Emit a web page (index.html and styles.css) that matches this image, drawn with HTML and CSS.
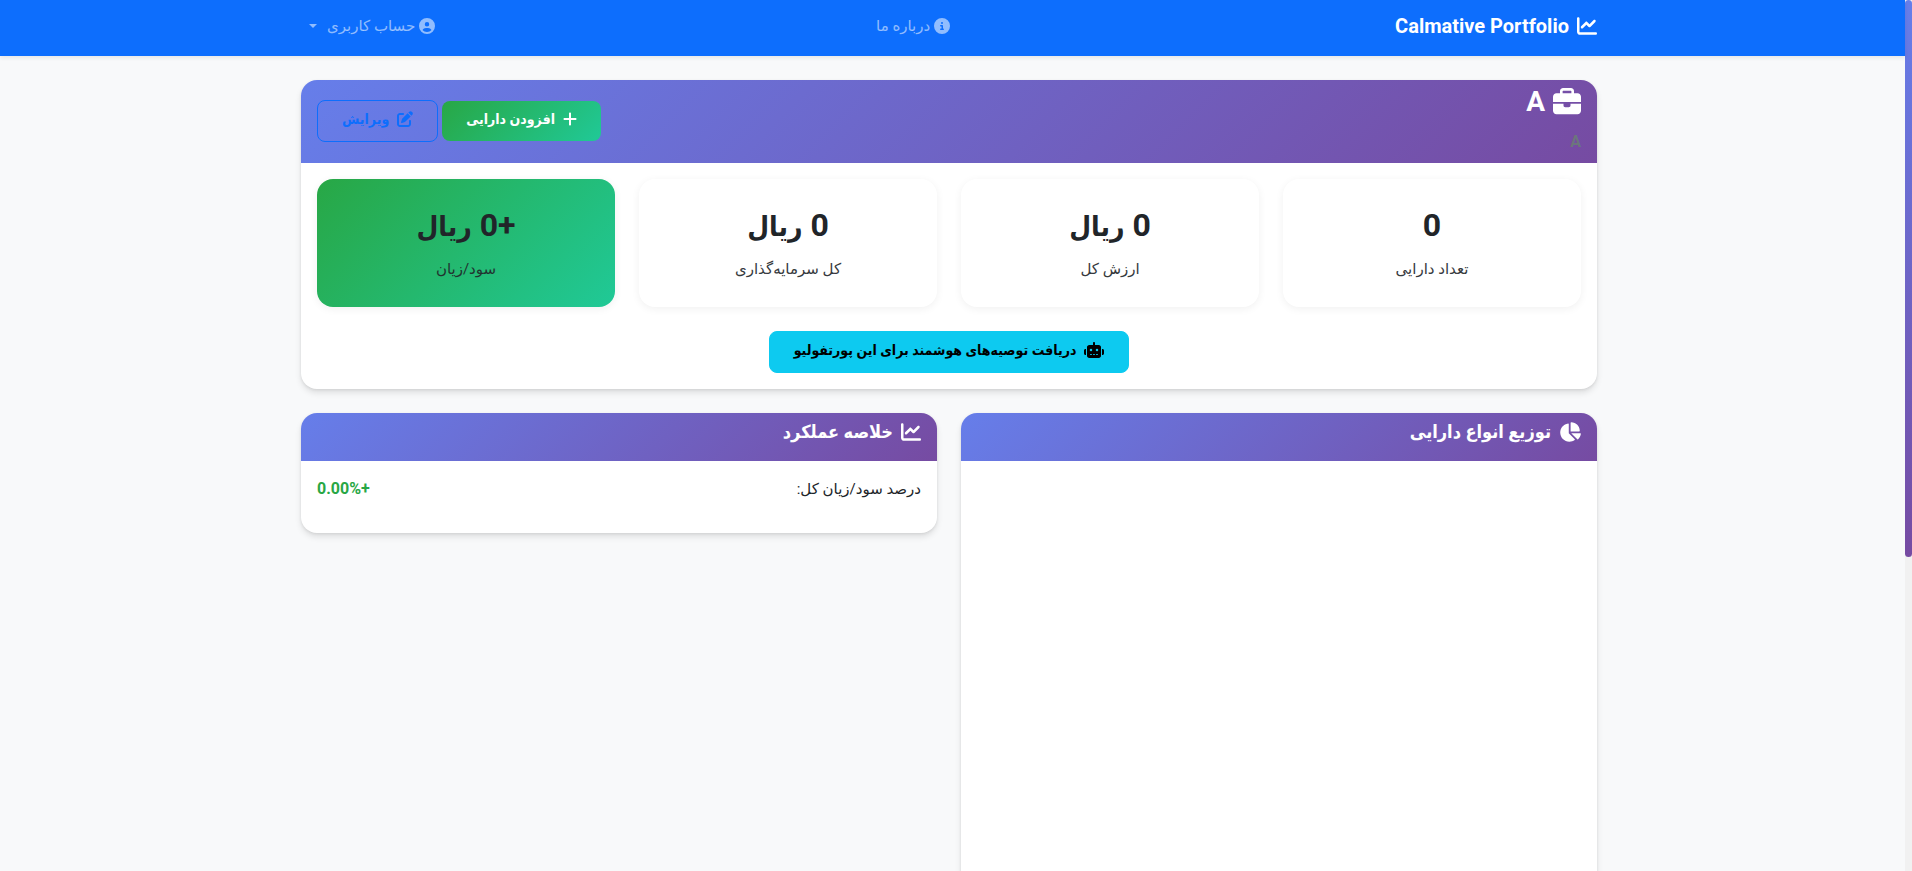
FILE: index.html
```html
<!DOCTYPE html>
<html lang="fa" dir="rtl">
<head>
<meta charset="utf-8">
<meta name="viewport" content="width=device-width, initial-scale=1">
<title>Calmative Portfolio</title>
<link rel="stylesheet" href="styles.css">
</head>
<body>
<svg class="sprite" aria-hidden="true">
  <symbol id="chart-line" viewBox="0 0 512 512"><path d="M64 64c0-17.7-14.3-32-32-32S0 46.3 0 64V400c0 44.2 35.8 80 80 80H480c17.7 0 32-14.3 32-32s-14.3-32-32-32H80c-8.8 0-16-7.2-16-16V64zm406.6 86.6c12.5-12.5 12.5-32.8 0-45.3s-32.8-12.5-45.3 0L320 210.7l-57.4-57.4c-12.5-12.5-32.8-12.5-45.3 0l-112 112c-12.5 12.5-12.5 32.8 0 45.3s32.8 12.5 45.3 0L240 221.3l57.4 57.4c12.5 12.5 32.8 12.5 45.3 0l128-128z"/></symbol>
  <symbol id="circle-info" viewBox="0 0 512 512"><path d="M256 512A256 256 0 1 0 256 0a256 256 0 1 0 0 512zM216 336h24V272H216c-13.3 0-24-10.7-24-24s10.7-24 24-24h48c13.3 0 24 10.7 24 24v88h8c13.3 0 24 10.7 24 24s-10.7 24-24 24H216c-13.3 0-24-10.7-24-24s10.7-24 24-24zm40-208a32 32 0 1 1 0 64 32 32 0 1 1 0-64z"/></symbol>
  <symbol id="circle-user" viewBox="0 0 512 512"><path d="M399 384.2C376.9 345.8 335.4 320 288 320H224c-47.4 0-88.9 25.8-111 64.2c35.2 39.2 86.2 63.8 143 63.8s107.8-24.7 143-63.8zM0 256a256 256 0 1 1 512 0A256 256 0 1 1 0 256zm256 16a72 72 0 1 0 0-144 72 72 0 1 0 0 144z"/></symbol>
  <symbol id="briefcase" viewBox="0 0 512 512"><path d="M184 48H328c4.4 0 8 3.6 8 8V96H176V56c0-4.4 3.6-8 8-8zm-56 8V96H64C28.7 96 0 124.7 0 160v96H192 320 512V160c0-35.3-28.7-64-64-64H384V56c0-30.9-25.1-56-56-56H184c-30.9 0-56 25.1-56 56zM512 288H320v32c0 17.7-14.3 32-32 32H224c-17.7 0-32-14.3-32-32V288H0V416c0 35.3 28.7 64 64 64H448c35.3 0 64-28.7 64-64V288z"/></symbol>
  <symbol id="plus" viewBox="0 0 448 512"><path d="M256 80c0-17.7-14.3-32-32-32s-32 14.3-32 32V224H48c-17.7 0-32 14.3-32 32s14.3 32 32 32H192V432c0 17.7 14.3 32 32 32s32-14.3 32-32V288H400c17.7 0 32-14.3 32-32s-14.3-32-32-32H256V80z"/></symbol>
  <symbol id="edit" viewBox="0 0 512 512"><path d="M471.6 21.7c-21.9-21.9-57.3-21.9-79.2 0L362.3 51.7l97.9 97.9 30.1-30.1c21.9-21.9 21.9-57.3 0-79.2L471.6 21.7zm-299.2 220c-6.1 6.1-10.8 13.6-13.5 21.9l-29.6 88.8c-2.9 8.6-.6 18.1 5.8 24.6s15.9 8.7 24.6 5.8l88.8-29.6c8.2-2.7 15.7-7.4 21.9-13.5L437.7 172.3 339.7 74.3 172.4 241.7zM96 64C43 64 0 107 0 160V416c0 53 43 96 96 96H352c53 0 96-43 96-96V320c0-17.7-14.3-32-32-32s-32 14.3-32 32v96c0 17.7-14.3 32-32 32H96c-17.7 0-32-14.3-32-32V160c0-17.7 14.3-32 32-32h96c17.7 0 32-14.3 32-32s-14.3-32-32-32H96z"/></symbol>
  <symbol id="robot" viewBox="0 0 640 512"><path d="M320 0c17.7 0 32 14.3 32 32V96H472c39.8 0 72 32.2 72 72V440c0 39.8-32.2 72-72 72H168c-39.8 0-72-32.2-72-72V168c0-39.8 32.2-72 72-72H288V32c0-17.7 14.3-32 32-32zM208 384c-8.8 0-16 7.2-16 16s7.2 16 16 16h32c8.8 0 16-7.2 16-16s-7.2-16-16-16H208zm96 0c-8.8 0-16 7.2-16 16s7.2 16 16 16h32c8.8 0 16-7.2 16-16s-7.2-16-16-16H304zm96 0c-8.8 0-16 7.2-16 16s7.2 16 16 16h32c8.8 0 16-7.2 16-16s-7.2-16-16-16H400zM264 256a40 40 0 1 0-80 0 40 40 0 1 0 80 0zm152 40a40 40 0 1 0 0-80 40 40 0 1 0 0 80zM48 224H64V416H48c-26.5 0-48-21.5-48-48V272c0-26.5 21.5-48 48-48zm544 0c26.5 0 48 21.5 48 48v96c0 26.5-21.5 48-48 48H576V224h16z"/></symbol>
  <symbol id="chart-pie" viewBox="0 0 576 512"><path d="M304 240V16.6c0-9 7-16.6 16-16.6C443.7 0 544 100.3 544 224c0 9-7.6 16-16.6 16H304zM32 272C32 150.7 122.1 50.3 239 34.3c9.2-1.3 17 6.1 17 15.4V288L412.5 444.5c6.7 6.7 6.2 17.7-1.5 23.1C371.8 495.6 323.8 512 272 512C139.5 512 32 404.6 32 272zm526.4 16c9.3 0 16.6 7.8 15.4 17c-7.7 55.9-34.6 105.6-73.9 142.3c-6 5.6-15.4 5.2-21.2-.7L320 288H558.4z"/></symbol>
</svg>
<div class="scroller">
  <div class="scroll-track"><div class="scroll-thumb"></div></div>
  <div class="page">
    <header class="navbar">
      <nav class="container navbar-inner">
        <a class="brand" href="#"><svg class="icon"><use href="#chart-line"/></svg><span>Calmative Portfolio</span></a>
        <a class="nav-link" href="#"><svg class="icon"><use href="#circle-info"/></svg><span>درباره ما</span></a>
        <button class="nav-link" type="button"><svg class="icon"><use href="#circle-user"/></svg><span>حساب کاربری</span><i class="caret"></i></button>
      </nav>
    </header>
    <main class="content">
      <div class="container">
        <section class="card">
          <div class="card-header summary-header">
            <div>
              <h1 class="title"><svg class="icon"><use href="#briefcase"/></svg><span>A</span></h1>
              <p class="description">A</p>
            </div>
            <div class="actions">
              <a class="btn btn-add" href="#"><svg class="icon icon-plus"><use href="#plus"/></svg><span>افزودن دارایی</span></a>
              <a class="btn btn-edit" href="#"><svg class="icon"><use href="#edit"/></svg><span>ویرایش</span></a>
            </div>
          </div>
          <div class="card-body">
            <div class="stats">
              <div class="stat"><div class="stat-value">0</div><div class="stat-label">تعداد دارایی</div></div>
              <div class="stat"><div class="stat-value">0 <span class="unit">ریال</span></div><div class="stat-label">ارزش کل</div></div>
              <div class="stat"><div class="stat-value">0 <span class="unit">ریال</span></div><div class="stat-label">کل سرمایه‌گذاری</div></div>
              <div class="stat stat-profit"><div class="stat-value">+0 <span class="unit">ریال</span></div><div class="stat-label">سود/زیان</div></div>
            </div>
            <div class="advice">
              <a class="btn btn-advice" href="#"><svg class="icon icon-robot"><use href="#robot"/></svg><span>دریافت توصیه‌های هوشمند برای این پورتفولیو</span></a>
            </div>
          </div>
        </section>
        <div class="panels">
          <section class="card">
            <div class="card-header"><h2 class="panel-title"><svg class="icon icon-pie"><use href="#chart-pie"/></svg><span>توزیع انواع دارایی</span></h2></div>
            <div class="chart-area"></div>
          </section>
          <section class="card">
            <div class="card-header"><h2 class="panel-title"><svg class="icon"><use href="#chart-line"/></svg><span>خلاصه عملکرد</span></h2></div>
            <div class="card-body">
              <div class="metric"><span class="metric-label">درصد سود/زیان کل:</span><strong class="positive">+0.00%</strong></div>
            </div>
          </section>
        </div>
      </div>
    </main>
  </div>
</div>
</body>
</html>
```
FILE: styles.css
```css
* { box-sizing: border-box; }

body {
  margin: 0;
  background: #f8f9fa;
  color: #212529;
  font: 16px/24px Roboto, "DejaVu Sans", sans-serif;
}

h1, h2, p { margin: 0; }
a { color: inherit; text-decoration: none; }
button { border: 0; background: none; font: inherit; cursor: pointer; }

.sprite { position: absolute; width: 0; height: 0; }
.icon { width: 1em; height: 1em; fill: currentColor; flex: none; }

.scroller { display: flex; height: 100vh; overflow: hidden; }
.page { flex: 1; }
.scroll-track { width: 7px; background: #f1f1f1; }
.scroll-thumb {
  height: 64%;
  border-radius: 4px;
  background: linear-gradient(180deg, #667eea, #764ba2);
}

.container {
  width: 100%;
  max-width: 1320px;
  margin: 0 auto;
  padding: 0 12px;
}

.navbar {
  padding-right: 7px;
  background: #0d6efd;
  box-shadow: 0 2px 4px rgba(0, 0, 0, .075);
}
.navbar-inner {
  display: flex;
  align-items: center;
  justify-content: space-between;
  height: 56px;
  padding-bottom: 4px;
}
.brand {
  display: flex;
  align-items: center;
  gap: 8px;
  margin-left: 12px;
  color: #fff;
  font-size: 20px;
  font-weight: 700;
}
.nav-link {
  display: flex;
  align-items: center;
  gap: 4px;
  padding: 8px;
  color: rgba(255, 255, 255, .55);
}
.nav-link span { font-size: 15px; }
.caret {
  margin-right: 6px;
  border: 4px solid transparent;
  border-top-color: currentColor;
  border-bottom: 0;
}

.content { padding: 24px 7px 0 0; }

.card {
  border-radius: 16px;
  background: #fff;
  box-shadow: 0 4px 6px rgba(0, 0, 0, .1), 0 1px 3px rgba(0, 0, 0, .08);
  overflow: hidden;
}
.card-header {
  padding: 0 16px;
  background: linear-gradient(135deg, #667eea 0%, #764ba2 100%);
  color: #fff;
}
.card-body { padding: 16px; }

.summary-header {
  display: flex;
  align-items: center;
  justify-content: space-between;
  height: 83px;
}
.title {
  display: flex;
  align-items: center;
  gap: 8px;
  margin-bottom: 12px;
  font-size: 28px;
  line-height: 32px;
}
.description {
  padding-bottom: 4px;
  color: #6c757d;
  font-weight: 700;
}

.btn, .unit, .panel-title { font-family: Roboto, "DejaVu Sans Condensed", "DejaVu Sans", sans-serif; }

.actions {
  display: flex;
  align-items: center;
  gap: 4px;
  padding-bottom: 2px;
}
.btn {
  display: inline-flex;
  align-items: center;
  gap: 8px;
  padding: 6px 24px 10px;
  border-radius: 8px;
  font-size: 14px;
  font-weight: 700;
}
.btn .icon { font-size: 16px; }
.btn .icon-plus { width: 14px; }
.btn .icon-robot { width: 20px; }
.btn-add { background: linear-gradient(135deg, #28a745, #20c997); color: #fff; }
.btn-edit { border: 1px solid #0d6efd; color: #0d6efd; }
.btn-advice { border: 1px solid #0dcaf0; background: #0dcaf0; color: #000; }

.stats {
  display: grid;
  grid-template-columns: repeat(4, 1fr);
  gap: 24px;
}
.stat {
  padding: 22px 24px 26px;
  border-radius: 16px;
  background: #fff;
  box-shadow: 0 2px 8px rgba(0, 0, 0, .06);
  text-align: center;
}
.stat-profit { background: linear-gradient(135deg, #28a745, #20c997); }
.stat-value {
  margin-bottom: 8px;
  font-size: 32px;
  font-weight: 700;
  line-height: 48px;
}
.unit { font-size: 28px; line-height: 32px; }
.stat-label { font-size: 15px; opacity: .9; }
.advice { display: flex; justify-content: center; margin-top: 24px; }

.panels {
  display: grid;
  grid-template-columns: 1fr 1fr;
  align-items: start;
  gap: 24px;
  margin-top: 24px;
}
.panel-title {
  display: flex;
  align-items: center;
  gap: 8px;
  height: 48px;
  padding-bottom: 10px;
  font-size: 18px;
  font-weight: 700;
}
.panel-title .icon { width: 20px; height: 20px; }
.panel-title .icon-pie { width: 22px; }
.chart-area { height: 640px; }
.metric {
  display: flex;
  justify-content: space-between;
  margin-bottom: 16px;
}
.metric-label { font-size: 15px; }
.positive { color: #28a745; }
```
